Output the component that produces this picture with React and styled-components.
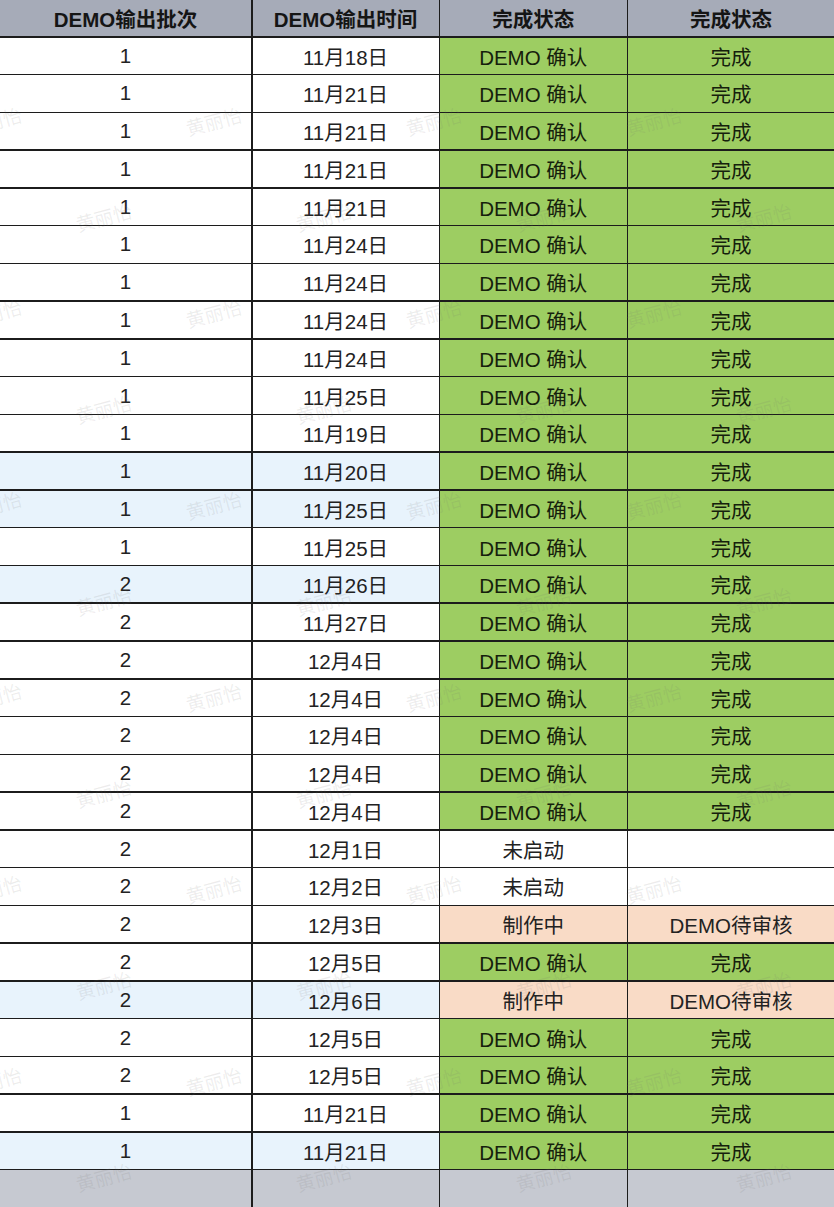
import React from "react";
import styled, { createGlobalStyle } from "styled-components";

const rows = [
  ["1", "11月18日", "done"],
  ["1", "11月21日", "done"],
  ["1", "11月21日", "done"],
  ["1", "11月21日", "done"],
  ["1", "11月21日", "done"],
  ["1", "11月24日", "done"],
  ["1", "11月24日", "done"],
  ["1", "11月24日", "done"],
  ["1", "11月24日", "done"],
  ["1", "11月25日", "done"],
  ["1", "11月19日", "done"],
  ["1", "11月20日", "done", true],
  ["1", "11月25日", "done", true],
  ["1", "11月25日", "done"],
  ["2", "11月26日", "done", true],
  ["2", "11月27日", "done"],
  ["2", "12月4日", "done"],
  ["2", "12月4日", "done"],
  ["2", "12月4日", "done"],
  ["2", "12月4日", "done"],
  ["2", "12月4日", "done"],
  ["2", "12月1日", "idle"],
  ["2", "12月2日", "idle"],
  ["2", "12月3日", "wip"],
  ["2", "12月5日", "done"],
  ["2", "12月6日", "wip", true],
  ["2", "12月5日", "done"],
  ["2", "12月5日", "done"],
  ["1", "11月21日", "done"],
  ["1", "11月21日", "done", true],
];

const statusText = {
  done: ["DEMO 确认", "完成"],
  idle: ["未启动", ""],
  wip: ["制作中", "DEMO待审核"],
};

const statusTone = { done: "green", wip: "peach", idle: "white" };

// 水印位置
const marks = [];
for (let k = 0; k < 7; k++) {
  [-35, 185, 405, 625].forEach((x) => marks.push([x, 121 + k * 192]));
  [75, 295, 515, 735].forEach((x) => marks.push([x, 217 + k * 192]));
}

function App() {
  return (
    <>
      <GlobalStyle />
      <Wrap>
        <Grid>
          <Head>DEMO输出批次</Head>
          <Head>DEMO输出时间</Head>
          <Head>完成状态</Head>
          <Head>完成状态</Head>
          {rows.map(([batch, date, status, blue], i) => (
            <React.Fragment key={i}>
              <Cell $tone={blue ? "blue" : "white"}>{batch}</Cell>
              <Cell $tone={blue ? "blue" : "white"}>{date}</Cell>
              <Cell $tone={statusTone[status]}>{statusText[status][0]}</Cell>
              <Cell $tone={statusTone[status]}>{statusText[status][1]}</Cell>
            </React.Fragment>
          ))}
          <Foot />
          <Foot />
          <Foot />
          <Foot />
        </Grid>
        <Marks>
          {marks.map(([x, y], i) => (
            <Mark key={i} style={{ left: x, top: y - 14 }}>
              黄丽怡
            </Mark>
          ))}
        </Marks>
      </Wrap>
    </>
  );
}

export default App;

// Styled Components

const GlobalStyle = createGlobalStyle`
  html, body {
    margin: 0;
    padding: 0;
    background: #ffffff;
    overflow: hidden;
  }
  body {
    font-family: "Liberation Sans", "Noto Sans CJK SC", Arial, sans-serif;
  }
`;

const Wrap = styled.div`
  position: relative;
  width: 834px;
  height: 1207px;
  overflow: hidden;
`;

const Grid = styled.div`
  display: grid;
  grid-template-columns: 251px 186px 186.5px 1fr;
  grid-template-rows: 36px repeat(30, 36.27px) 40px;
  column-gap: 1.5px;
  row-gap: 1.5px;
  background: #1c1c1c;
`;

const toneColors = {
  white: "#ffffff",
  blue: "#e8f3fc",
  green: "#9dcd62",
  peach: "#f9dbc6",
};

const Head = styled.div`
  display: flex;
  align-items: center;
  justify-content: center;
  background: #a6abb8;
  color: #151515;
  font-weight: bold;
  font-size: 20.5px;
`;

const Cell = styled.div`
  display: flex;
  align-items: center;
  justify-content: center;
  background: ${(p) => toneColors[p.$tone]};
  color: ${(p) => (p.$tone === "green" ? "#15200c" : "#222222")};
  font-size: 20.5px;
`;

const Foot = styled.div`
  background: #c6c9d1;
`;

const Marks = styled.div`
  position: absolute;
  inset: 0;
  pointer-events: none;
`;

const Mark = styled.span`
  position: absolute;
  font-size: 19px;
  color: rgba(110, 110, 110, 0.12);
  transform: rotate(-15deg);
  white-space: nowrap;
  font-family: "Noto Sans CJK SC", sans-serif;
`;
